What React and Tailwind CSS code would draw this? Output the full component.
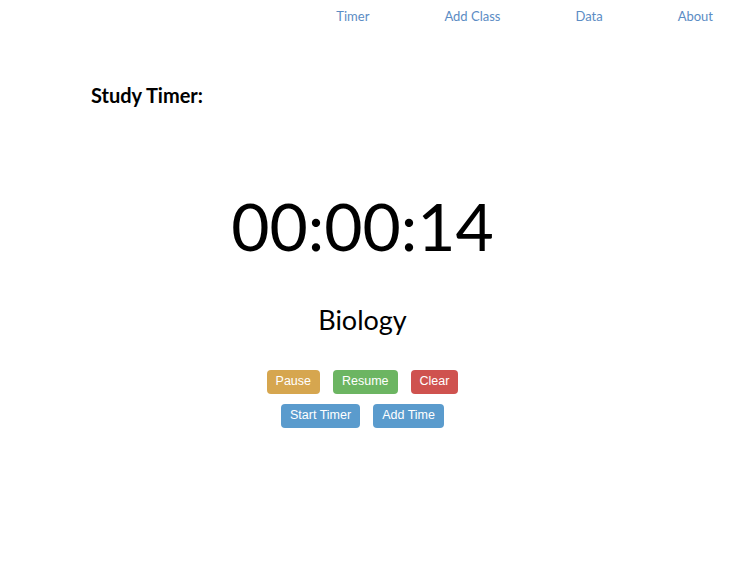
import React, { useState } from "react";

const classes = ["Biology"];

function Btn({ color, children }) {
  return (
    <button
      className={`${color} text-white text-[12.5px] leading-none h-[24px] px-[9px] rounded-[4px] font-['Liberation_Sans',Arial,sans-serif]`}
    >
      {children}
    </button>
  );
}

export default function App() {
  const [seconds] = useState(14);

  const fmt = (n) => String(n).padStart(2, "0");
  const time = `${fmt(Math.floor(seconds / 3600))}:${fmt(Math.floor((seconds % 3600) / 60))}:${fmt(seconds % 60)}`;

  return (
    <div className="w-[732px] h-[573px] bg-white font-['Lato',sans-serif] text-black">
      {/* top nav */}
      <nav className="flex justify-end gap-[75px] pr-[19px] pt-[7px] text-[13px] text-[#5b8cc4]">
        <a>Timer</a>
        <a>Add Class</a>
        <a>Data</a>
        <a>About</a>
      </nav>

      <h1 className="ml-[91px] mt-[53px] text-[20px] font-bold">Study Timer:</h1>

      <div className="flex flex-col items-center pr-[7px]">
        <div className="mt-[83px] text-[66px] leading-none">{time}</div>
        <div className="mt-[47px] text-[27px] leading-none">{classes[0]}</div>

        <div className="mt-[37px] flex gap-[13px]">
          <Btn color="bg-[#d6a64f]">Pause</Btn>
          <Btn color="bg-[#6cb562]">Resume</Btn>
          <Btn color="bg-[#cf524f]">Clear</Btn>
        </div>
        <div className="mt-[10px] flex gap-[13px]">
          <Btn color="bg-[#5a9bcd]">Start Timer</Btn>
          <Btn color="bg-[#5a9bcd]">Add Time</Btn>
        </div>
      </div>
    </div>
  );
}
